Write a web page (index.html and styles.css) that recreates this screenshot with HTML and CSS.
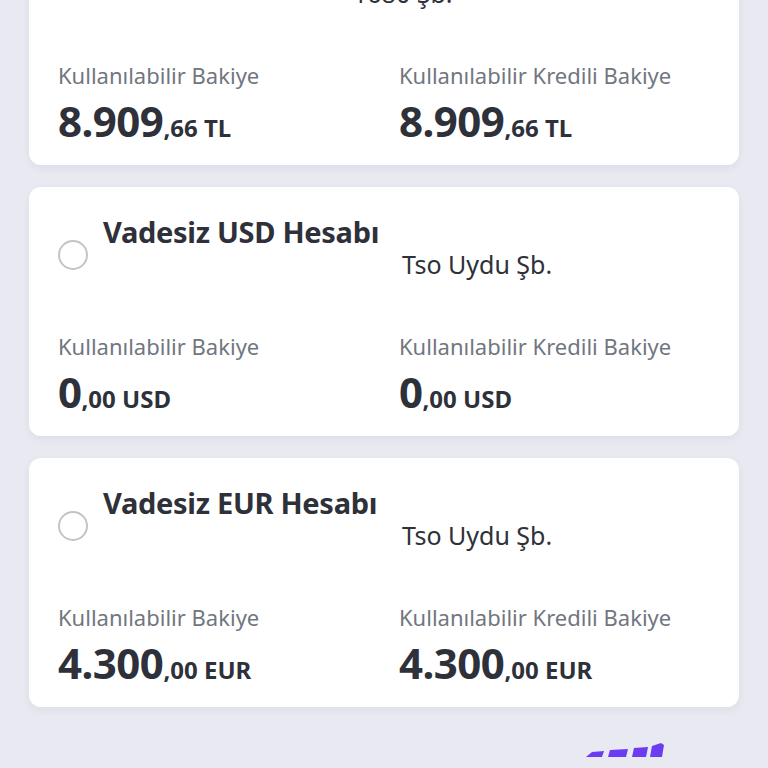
FILE: index.html
```html
<!DOCTYPE html>
<html lang="tr">
<head>
    <meta charset="utf-8">
    <title>Hesaplarım</title>
    <meta name="viewport" content="width=device-width, initial-scale=1.0">
    <link rel="stylesheet" href="styles.css">
</head>
<body>

<div class="account-list">
    <div class="account-card">
        <div class="account-head">
            <span class="radio"></span>
            <div class="account-info">
                <div class="account-title">Vadesiz TL Hesabı</div>
                <div class="account-sub account-sub-short">1680 Şb.</div>
            </div>
        </div>
        <div class="balances">
            <div class="balance">
                <div class="balance-label">Kullanılabilir Bakiye</div>
                <div class="balance-value">8.909<span class="fraction">,66 TL</span></div>
            </div>
            <div class="balance">
                <div class="balance-label">Kullanılabilir Kredili Bakiye</div>
                <div class="balance-value">8.909<span class="fraction">,66 TL</span></div>
            </div>
        </div>
    </div>

    <div class="account-card">
        <div class="account-head">
            <span class="radio"></span>
            <div class="account-info">
                <div class="account-title">Vadesiz USD Hesabı</div>
                <div class="account-sub">Tso Uydu Şb.</div>
            </div>
        </div>
        <div class="balances">
            <div class="balance">
                <div class="balance-label">Kullanılabilir Bakiye</div>
                <div class="balance-value">0<span class="fraction">,00 USD</span></div>
            </div>
            <div class="balance">
                <div class="balance-label">Kullanılabilir Kredili Bakiye</div>
                <div class="balance-value">0<span class="fraction">,00 USD</span></div>
            </div>
        </div>
    </div>

    <div class="account-card">
        <div class="account-head">
            <span class="radio"></span>
            <div class="account-info">
                <div class="account-title">Vadesiz EUR Hesabı</div>
                <div class="account-sub">Tso Uydu Şb.</div>
            </div>
        </div>
        <div class="balances">
            <div class="balance">
                <div class="balance-label">Kullanılabilir Bakiye</div>
                <div class="balance-value">4.300<span class="fraction">,00 EUR</span></div>
            </div>
            <div class="balance">
                <div class="balance-label">Kullanılabilir Kredili Bakiye</div>
                <div class="balance-value">4.300<span class="fraction">,00 EUR</span></div>
            </div>
        </div>
    </div>
</div>

<div class="footer-mark">
    <svg width="90" height="20" viewBox="0 0 90 20">
        <path d="M4 20 L10 15 L22 14 L20 20 Z" fill="#6b3cf2"/>
        <path d="M28 13 L46 12 L44 20 L26 20 Z" fill="#6b3cf2"/>
        <path d="M52 11 L66 10 L64 20 L50 20 Z" fill="#6b3cf2"/>
        <path d="M70 9 L79 6 L82 8 L80 20 L68 20 Z" fill="#6b3cf2"/>
    </svg>
</div>

</body>
</html>
```

FILE: styles.css
```css
body {
    margin: 0;
    background-color: #e9e9f1;
    font-family: "Noto Sans", "Open Sans", sans-serif;
    color: #2e3139;
    overflow: hidden;
}
.account-list {
    display: flex;
    flex-direction: column;
    gap: 22px;
    margin: -84px 29px 0 29px;
}
.account-card {
    background: #fff;
    border-radius: 12px;
    box-shadow: 0 3px 8px rgba(40, 40, 80, 0.06);
    height: 249px;
    box-sizing: border-box;
    padding: 29px 29px 0 29px;
}
.account-head {
    display: flex;
    align-items: center;
}
.radio {
    width: 26px;
    height: 26px;
    border: 2.5px solid #c4c4c8;
    border-radius: 50%;
    margin-top: 14px;
    margin-right: 15px;
    flex-shrink: 0;
}
.account-title {
    font-size: 29px;
    line-height: 32px;
    font-weight: bold;
    letter-spacing: -0.3px;
}
.account-sub {
    font-size: 25px;
    line-height: 32px;
    padding-left: 299px;
    color: #2e3139;
}
.account-sub-short {
    padding-left: 250px;
}
.balances {
    display: grid;
    grid-template-columns: 341px 1fr;
    margin-top: 53px;
}
.balance-label {
    font-size: 22px;
    line-height: 26px;
    color: #71767f;
}
.balance-value {
    font-size: 42px;
    line-height: 48px;
    font-weight: bold;
    margin-top: 9px;
    letter-spacing: -0.5px;
}
.fraction {
    font-size: 24px;
    letter-spacing: 0;
}
.footer-mark {
    display: flex;
    justify-content: flex-end;
    padding-right: 96px;
    margin-top: 30px;
}
```
